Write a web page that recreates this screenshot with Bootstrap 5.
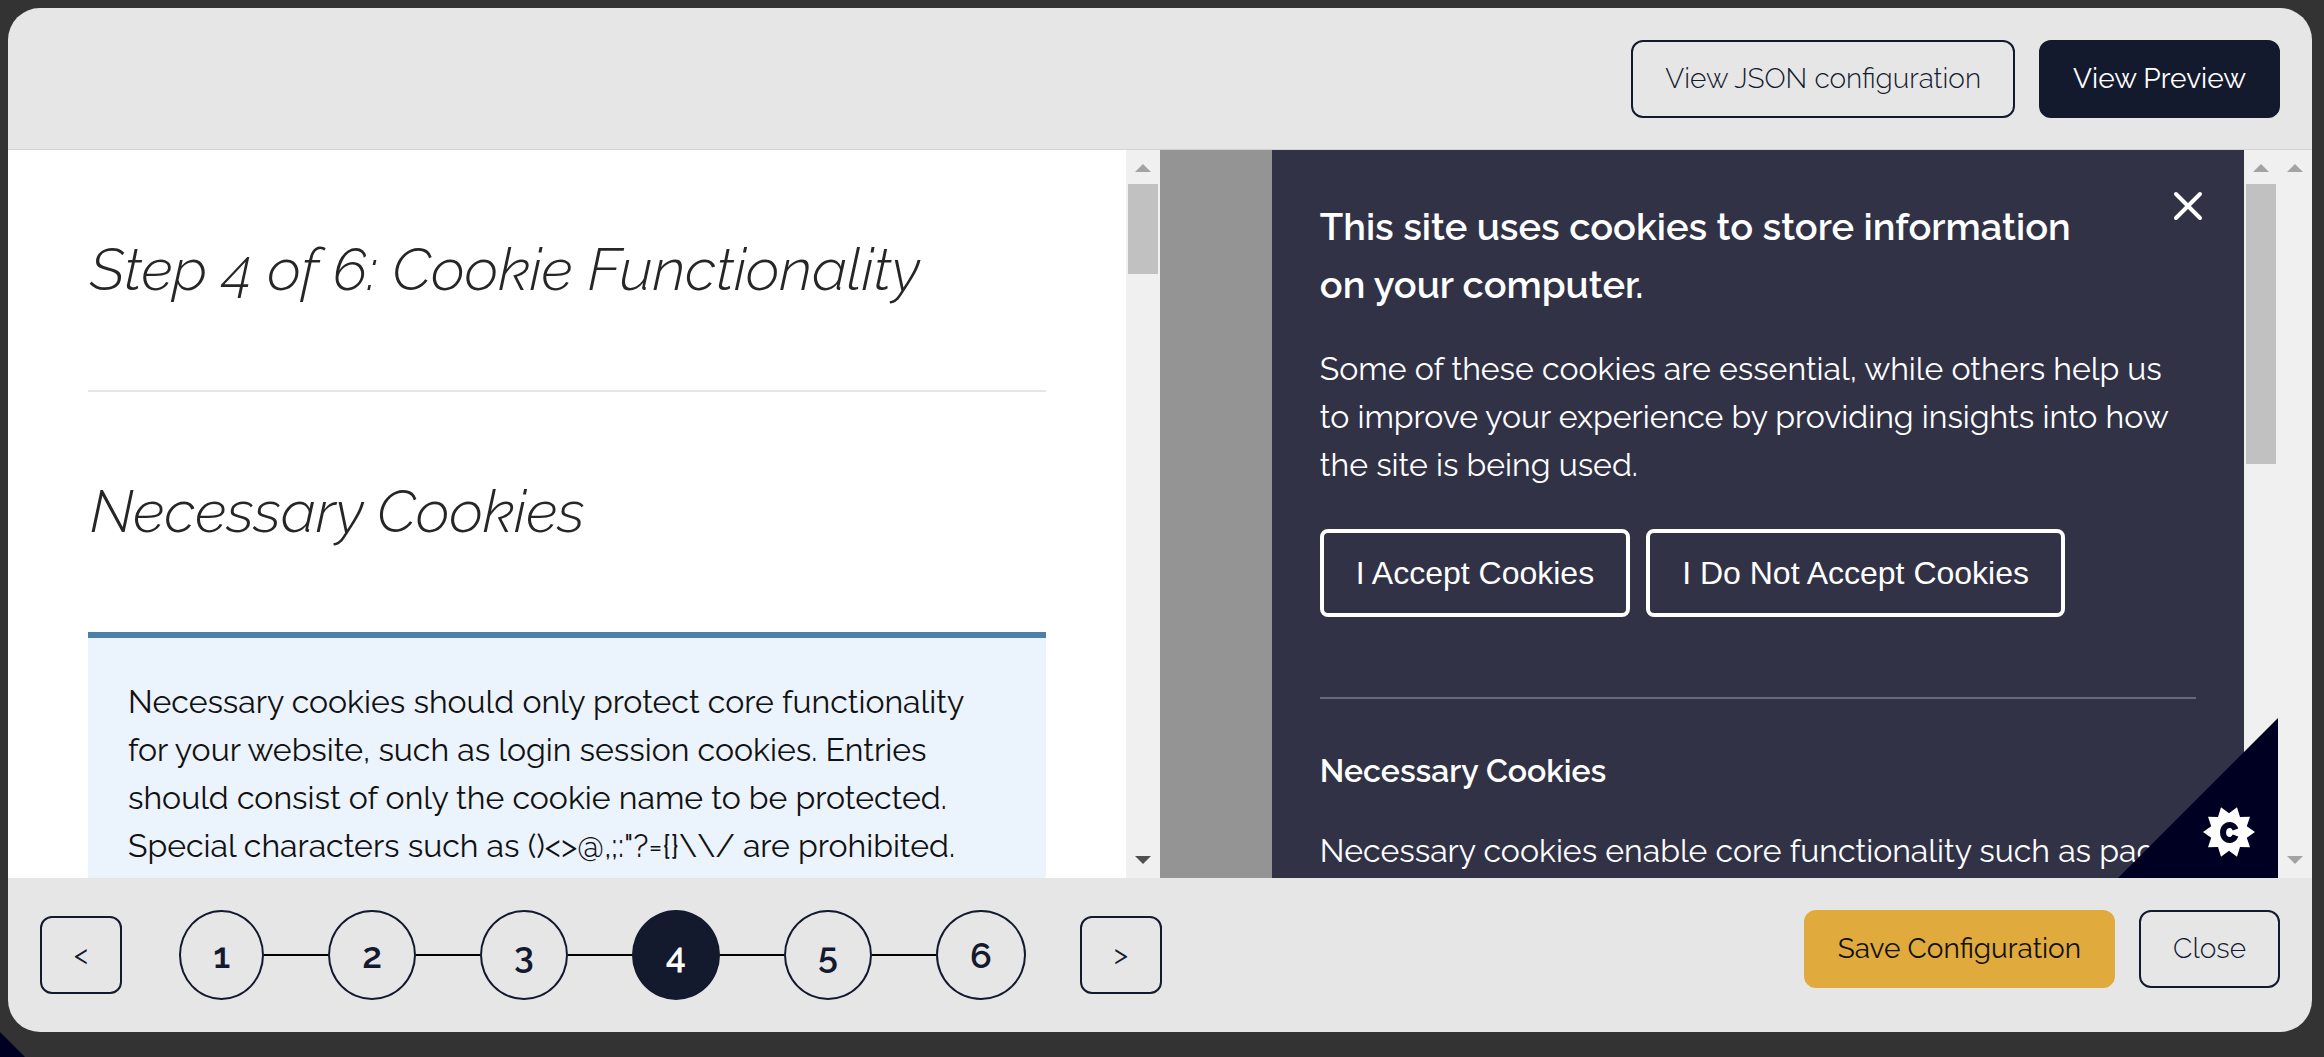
<!DOCTYPE html>
<html lang="en">
<head>
<meta charset="utf-8">
<meta name="viewport" content="width=device-width, initial-scale=1">
<title>Cookie configuration</title>
<link href="https://cdn.jsdelivr.net/npm/bootstrap@5.3.0/dist/css/bootstrap.min.css" rel="stylesheet">
<style>
:root { --ink: #141a2e; --bar: #e6e6e6; --panel: #323247; --corner: #000023; }
body { background: #333; font-family: Raleway, "Open Sans", sans-serif; font-size: 32px; line-height: 48px; color: #111; padding: 8px 12px 25px 8px; }
.page-corner { width: 25px; height: 25px; background: var(--corner); clip-path: polygon(0 0, 100% 100%, 0 100%); }
.dialog-shell { border-radius: 32px; background: var(--bar); }
.bar-top { padding: 32px; gap: 24px; box-shadow: inset 0 -1px #d2d2d2; }
.bar-bottom { padding: 32px; }
.btn-tool { --bs-btn-font-size: 28px; --bs-btn-font-weight: 300; --bs-btn-line-height: 42px; --bs-btn-padding-x: 32px; --bs-btn-padding-y: 16px; --bs-btn-border-width: 2px; --bs-btn-border-radius: 12px; --bs-btn-border-color: var(--ink); --bs-btn-color: var(--ink); --bs-btn-hover-bg: var(--ink); --bs-btn-hover-color: #fff; }
.btn-ink { --bs-btn-bg: var(--ink); --bs-btn-color: #fff; --bs-btn-font-weight: 400; }
.btn-gold { --bs-btn-bg: #e0ab3c; --bs-btn-border-color: #e0ab3c; --bs-btn-color: #111; --bs-btn-font-weight: 400; }
.btn-arrow { --bs-btn-font-weight: 400; }
.pane-form { padding: 86px 80px 0; }
.pane-form h1, .pane-form h2 { font-size: 59px; line-height: 68px; font-weight: 300; font-style: italic; font-variant-numeric: lining-nums; color: #262626; margin: 0; padding-left: 2px; }
.rule-light { height: 2px; background: #e6e6e6; margin: 86px 0; }
.note-box { margin-top: 86px; border-top: 6px solid #4c7faa; background: #ebf3fc; padding: 40px; }
.scroll-rail { width: 34px; background: #f0f0f0; }
.scroll-rail svg { width: 34px; height: 34px; }
.scroll-thumb { width: 30px; background: #c1c1c1; }
.thumb-short { height: 90px; }
.thumb-long { height: 280px; }
.preview-page { background: #949494; }
.consent-wrap { width: 90%; }
.consent { background: var(--panel); padding: 48px 48px 0; color: #fff; }
.consent h2 { font-size: 38px; line-height: 58px; font-weight: 600; margin: 0 80px 31px 0; }
.consent h3 { font-size: 32px; line-height: 48px; font-weight: 600; margin-bottom: 32px; }
.consent p { margin-bottom: 40px; }
.btn-consent { --bs-btn-font-family: "Liberation Sans", Arial, sans-serif; --bs-btn-font-size: 32px; --bs-btn-line-height: 48px; --bs-btn-color: #fff; --bs-btn-border-color: #fff; --bs-btn-border-width: 4px; --bs-btn-border-radius: 8px; --bs-btn-padding-x: 32px; --bs-btn-padding-y: 16px; --bs-btn-hover-color: #fff; --bs-btn-hover-border-color: #fff; }
.rule-dark { height: 2px; background: #69697a; margin: 80px 0 48px; }
.close-x { top: 38px; right: 38px; line-height: 0; }
.corner-badge { right: 34px; bottom: 0; }
.step-line { width: 64px; height: 2px; background: #000; }
.step-list { margin: 0 54px 0 57px; }
.btn-step { --bs-btn-font-size: 36px; --bs-btn-font-weight: 600; --bs-btn-line-height: 54px; --bs-btn-padding-x: 32px; --bs-btn-padding-y: 16px; --bs-btn-border-width: 2px; --bs-btn-border-radius: 50%; --bs-btn-border-color: var(--ink); --bs-btn-color: var(--ink); --bs-btn-active-bg: var(--ink); --bs-btn-active-border-color: var(--ink); --bs-btn-active-color: #fff; }
</style>
<script src="https://cdn.jsdelivr.net/npm/bootstrap@5.3.0/dist/js/bootstrap.bundle.min.js" defer></script>
</head>
<body class="vh-100 overflow-hidden">
<div class="page-corner position-absolute start-0 bottom-0"></div>
<main class="dialog-shell d-flex flex-column h-100 overflow-hidden">
  <header class="bar-top d-flex justify-content-end">
    <button type="button" class="btn btn-tool">View JSON configuration</button>
    <button type="button" class="btn btn-tool btn-ink">View Preview</button>
  </header>

  <div class="d-flex flex-grow-1 overflow-hidden">
    <section class="w-50 d-flex bg-white">
      <div class="pane-form flex-grow-1">
        <h1>Step 4 of 6: Cookie Functionality</h1>
        <div class="rule-light"></div>
        <h2>Necessary Cookies</h2>
        <div class="note-box">Necessary cookies should only protect core functionality for your website, such as login session cookies. Entries should consist of only the cookie name to be protected. Special characters such as ()&lt;&gt;@,;:"?={}\\/ are prohibited.</div>
      </div>
      <div class="scroll-rail d-flex flex-column align-items-center flex-shrink-0">
        <svg viewBox="0 0 34 34"><path d="M9 22L17 14L25 22Z" fill="#a3a3a3"/></svg>
        <div class="scroll-thumb thumb-short"></div>
        <svg class="mt-auto" viewBox="0 0 34 34"><path d="M9 12L17 20L25 12Z" fill="#505050"/></svg>
      </div>
    </section>

    <section class="w-50 d-flex position-relative">
      <div class="preview-page flex-grow-1 d-flex justify-content-end">
        <div class="consent-wrap d-flex">
          <div class="consent flex-grow-1 position-relative">
            <h2>This site uses cookies to store information on your computer.</h2>
            <p>Some of these cookies are essential, while others help us to improve your experience by providing insights into how the site is being used.</p>
            <div class="d-flex gap-3">
              <button type="button" class="btn btn-consent">I Accept Cookies</button>
              <button type="button" class="btn btn-consent">I Do Not Accept Cookies</button>
            </div>
            <div class="rule-dark"></div>
            <h3>Necessary Cookies</h3>
            <p>Necessary cookies enable core functionality such as page</p>
            <button type="button" class="close-x btn border-0 p-0 position-absolute" aria-label="Close">
              <svg width="36" height="36" viewBox="0 0 36 36"><path d="M6 6L30 30M30 6L6 30" stroke="#fff" stroke-width="4" stroke-linecap="round"/></svg>
            </button>
          </div>
          <div class="scroll-rail d-flex flex-column align-items-center flex-shrink-0">
            <svg viewBox="0 0 34 34"><path d="M9 22L17 14L25 22Z" fill="#a3a3a3"/></svg>
            <div class="scroll-thumb thumb-long"></div>
          </div>
        </div>
      </div>
      <div class="scroll-rail d-flex flex-column flex-shrink-0">
        <svg viewBox="0 0 34 34"><path d="M9 22L17 14L25 22Z" fill="#a3a3a3"/></svg>
        <svg class="mt-auto" viewBox="0 0 34 34"><path d="M9 12L17 20L25 12Z" fill="#a3a3a3"/></svg>
      </div>
      <svg class="corner-badge position-absolute" width="160" height="160" viewBox="0 0 160 160">
        <path d="M160 0V160H0Z" fill="#000023"/>
        <g transform="translate(111 114)">
          <path fill="#fff" d="M26 0L17.8 5.8L21 15.3L11 15.1L8 24.7L0 18.7L-8 24.7L-11 15.1L-21 15.3L-17.8 5.8L-26 0L-17.8 -5.8L-21 -15.3L-11 -15.1L-8 -24.7L0 -18.7L8 -24.7L11 -15.1L21 -15.3L17.8 -5.8Z"/>
          <path d="M6.500 -2.500A6.500 7.500 0 1 0 6.500 3.500" fill="none" stroke="#000023" stroke-width="6"/>
        </g>
      </svg>
    </section>
  </div>

  <footer class="bar-bottom d-flex justify-content-between align-items-start">
    <nav class="d-flex align-items-center" aria-label="Steps">
      <button type="button" class="btn btn-tool btn-arrow">&lt;</button>
      <div class="step-list d-flex align-items-center">
        <button type="button" class="btn btn-step">1</button><span class="step-line"></span>
        <button type="button" class="btn btn-step">2</button><span class="step-line"></span>
        <button type="button" class="btn btn-step">3</button><span class="step-line"></span>
        <button type="button" class="btn btn-step active" aria-current="step">4</button><span class="step-line"></span>
        <button type="button" class="btn btn-step">5</button><span class="step-line"></span>
        <button type="button" class="btn btn-step">6</button>
      </div>
      <button type="button" class="btn btn-tool btn-arrow">&gt;</button>
    </nav>
    <div class="d-flex gap-4">
      <button type="button" class="btn btn-tool btn-gold">Save Configuration</button>
      <button type="button" class="btn btn-tool">Close</button>
    </div>
  </footer>
</main>
</body>
</html>
